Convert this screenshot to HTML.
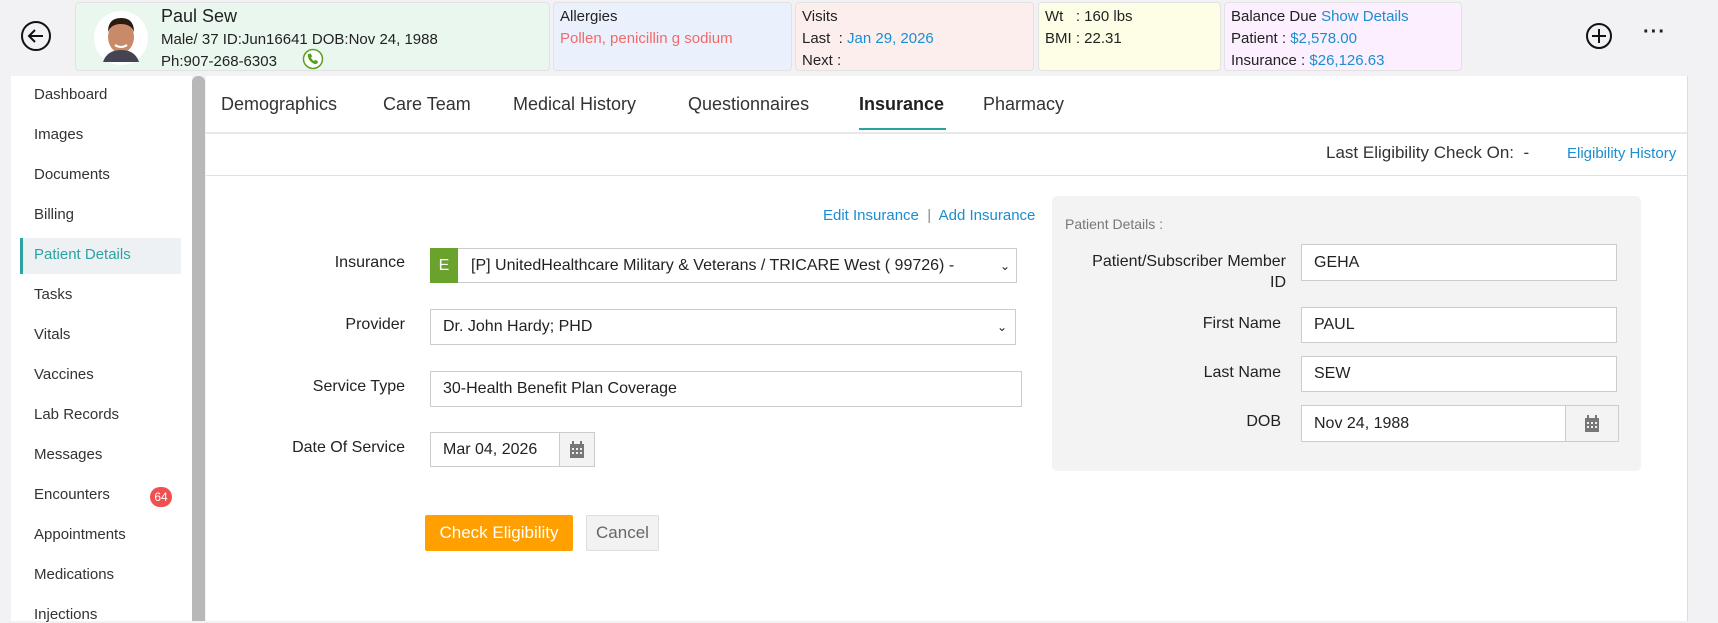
<!DOCTYPE html>
<html><head><meta charset="utf-8"><style>
*{box-sizing:border-box;margin:0;padding:0}
body{width:1718px;height:621px;overflow:hidden;background:#f2f2f4;font-family:"Liberation Sans",sans-serif;color:#222;position:relative}
.a{position:absolute;white-space:nowrap}
.card{position:absolute;top:2px;height:69px;border:1px solid #e2e2e2;border-radius:4px;font-size:15px;line-height:22px;padding:3px 6px}
.blue{color:#1a8ed0}
.side{font-size:15px;color:#333}
.inp{position:absolute;background:#fff;border:1px solid #ccc;font-size:16px;padding-left:12px;display:flex;align-items:center}
.lbl{position:absolute;font-size:16px;text-align:right;color:#222}
.cal{position:absolute;background:#f3f3f3;border:1px solid #ccc;display:flex;align-items:center;justify-content:center}
</style></head><body>
<svg class="a" style="left:20px;top:20px" width="32" height="32" viewBox="0 0 32 32"><circle cx="16" cy="16" r="14" fill="none" stroke="#111" stroke-width="2"/><path d="M23 16H9M15 10l-6 6 6 6" fill="none" stroke="#111" stroke-width="2"/></svg>
<div class="card" style="left:75px;width:475px;background:#eaf7ef">
<svg class="a" style="left:17px;top:7px" width="56" height="56" viewBox="0 0 56 56"><circle cx="28" cy="28" r="27" fill="#fff"/><ellipse cx="28" cy="27" rx="13" ry="16" fill="#c98a6a"/><path d="M15 22q0-14 13-14t13 14q-3-8-13-8t-13 8z" fill="#2a1a12"/><path d="M10 52q4-12 18-12t18 12" fill="#445"/><path d="M22 35q6 4 12 0" stroke="#fff" stroke-width="2" fill="none"/></svg>
<div class="a" style="left:85px;top:2px;font-size:18px">Paul Sew</div>
<div class="a" style="left:85px;top:26px">Male/ 37 ID:Jun16641 DOB:Nov 24, 1988</div>
<div class="a" style="left:85px;top:48px">Ph:907-268-6303</div>
<svg class="a" style="left:226px;top:45px" width="22" height="22" viewBox="0 0 22 22"><circle cx="11" cy="11" r="9.5" fill="#fff" stroke="#5aa020" stroke-width="1.5"/><path d="M7 6q1-1 2 0l1 2q0 1-1 1.5q1 2.5 3 3.5q.5-1 1.5-1l2 1q1 1 0 2q-1 1.5-3 1q-5-2-6.5-7q-.5-1.5 0-3z" fill="#5aa020"/></svg>
</div>
<div class="card" style="left:553px;width:239px;background:#eaf1fd">Allergies<br><span style="color:#f06a6a">Pollen, penicillin g sodium</span></div>
<div class="card" style="left:795px;width:239px;background:#fdeeee">Visits<br>Last &nbsp;: <span class="blue">Jan 29, 2026</span><br>Next :</div>
<div class="card" style="left:1038px;width:183px;background:#fefee6">Wt &nbsp;&nbsp;: 160 lbs<br>BMI : 22.31</div>
<div class="card" style="left:1224px;width:238px;background:#fcefff">Balance Due <span class="blue">Show Details</span><br>Patient : <span class="blue">$2,578.00</span><br>Insurance : <span class="blue">$26,126.63</span></div>
<svg class="a" style="left:1585px;top:22px" width="28" height="28" viewBox="0 0 28 28"><circle cx="14" cy="14" r="12" fill="none" stroke="#111" stroke-width="2"/><path d="M14 7v14M7 14h14" stroke="#111" stroke-width="2"/></svg>
<div class="a" style="left:1643px;top:21px;font-size:20px;letter-spacing:1px;font-weight:bold">&middot;&middot;&middot;</div>
<div class="a" style="left:11px;top:76px;width:181px;height:545px;background:#fff"></div>
<div class="a" style="left:192px;top:76px;width:13px;height:545px;background:#b8b8b8;border-radius:6px 6px 0 0"></div>
<div class="a" style="left:20px;top:238px;width:161px;height:36px;background:#eef1f3;border-left:3px solid #2aa3a3"></div>
<div class="a side" style="left:34px;top:86px">Dashboard</div>
<div class="a side" style="left:34px;top:126px">Images</div>
<div class="a side" style="left:34px;top:166px">Documents</div>
<div class="a side" style="left:34px;top:206px">Billing</div>
<div class="a side" style="left:34px;top:246px;color:#2aa3a3">Patient Details</div>
<div class="a side" style="left:34px;top:286px">Tasks</div>
<div class="a side" style="left:34px;top:326px">Vitals</div>
<div class="a side" style="left:34px;top:366px">Vaccines</div>
<div class="a side" style="left:34px;top:406px">Lab Records</div>
<div class="a side" style="left:34px;top:446px">Messages</div>
<div class="a side" style="left:34px;top:486px">Encounters</div>
<div class="a" style="left:150px;top:487px;width:22px;height:20px;border-radius:10px;background:#f05050;color:#fff;font-size:12px;text-align:center;line-height:20px">64</div>
<div class="a side" style="left:34px;top:526px">Appointments</div>
<div class="a side" style="left:34px;top:566px">Medications</div>
<div class="a side" style="left:34px;top:606px">Injections</div>
<div class="a" style="left:206px;top:76px;width:1482px;height:545px;background:#fff;border-right:1px solid #ddd"></div>
<div class="a" style="left:206px;top:132px;width:1481px;height:2px;background:#e8e8e8"></div>
<div class="a" style="left:206px;top:175px;width:1481px;height:1px;background:#e0e0e0"></div>
<div class="a" style="left:221px;top:94px;font-size:18px;color:#333">Demographics</div>
<div class="a" style="left:383px;top:94px;font-size:18px;color:#333">Care Team</div>
<div class="a" style="left:513px;top:94px;font-size:18px;color:#333">Medical History</div>
<div class="a" style="left:688px;top:94px;font-size:18px;color:#333">Questionnaires</div>
<div class="a" style="left:859px;top:94px;font-size:18px;font-weight:bold;color:#222">Insurance</div>
<div class="a" style="left:859px;top:128px;width:87px;height:2px;background:#2aa3a3"></div>
<div class="a" style="left:983px;top:94px;font-size:18px;color:#333">Pharmacy</div>
<div class="a" style="left:1326px;top:143px;font-size:17px;color:#333">Last Eligibility Check On: &nbsp;-</div>
<div class="a blue" style="left:1567px;top:145px;font-size:15px">Eligibility History</div>
<div class="a blue" style="left:823px;top:207px;font-size:15px">Edit Insurance &nbsp;<span style="color:#888">|</span>&nbsp; Add Insurance</div>
<div class="lbl" style="left:260px;width:145px;top:254px">Insurance</div>
<div class="lbl" style="left:260px;width:145px;top:316px">Provider</div>
<div class="lbl" style="left:260px;width:145px;top:378px">Service Type</div>
<div class="lbl" style="left:240px;width:165px;top:439px">Date Of Service</div>
<div class="inp" style="left:430px;top:248px;width:587px;height:35px;padding-left:40px;font-size:16px">[P] UnitedHealthcare Military &amp; Veterans / TRICARE West ( 99726) -<span style="position:absolute;right:6px;font-size:12px">&#8964;</span></div>
<div class="a" style="left:430px;top:248px;width:28px;height:35px;background:#6aa22e;color:#fff;font-size:16px;text-align:center;line-height:35px">E</div>
<div class="inp" style="left:430px;top:309px;width:586px;height:36px">Dr. John Hardy; PHD<span style="position:absolute;right:8px;font-size:12px">&#8964;</span></div>
<div class="inp" style="left:430px;top:371px;width:592px;height:36px">30-Health Benefit Plan Coverage</div>
<div class="inp" style="left:430px;top:432px;width:130px;height:35px">Mar 04, 2026</div>
<div class="cal" style="left:559px;top:432px;width:36px;height:35px"><svg width="14" height="17" viewBox="0 0 14 17"><rect x="0" y="3" width="14" height="14" fill="#777"/><path d="M3 0v4M11 0v4" stroke="#777" stroke-width="2"/><g fill="#eee"><rect x="2" y="7" width="2" height="2"/><rect x="6" y="7" width="2" height="2"/><rect x="10" y="7" width="2" height="2"/><rect x="2" y="11" width="2" height="2"/><rect x="6" y="11" width="2" height="2"/><rect x="10" y="11" width="2" height="2"/></g></svg></div>
<div class="a" style="left:425px;top:515px;width:148px;height:36px;background:#ffa000;border-radius:2px;color:#fff;font-size:17px;text-align:center;line-height:36px">Check Eligibility</div>
<div class="a" style="left:586px;top:515px;width:73px;height:36px;background:#f2f2f2;border:1px solid #ddd;border-radius:2px;color:#666;font-size:17px;text-align:center;line-height:34px">Cancel</div>
<div class="a" style="left:1052px;top:196px;width:589px;height:275px;background:#f3f3f3;border-radius:5px"></div>
<div class="a" style="left:1065px;top:216px;font-size:14px;color:#777">Patient Details :</div>
<div class="lbl" style="left:1050px;width:236px;top:251px;line-height:21px">Patient/Subscriber Member<br>ID</div>
<div class="lbl" style="left:1100px;width:181px;top:315px">First Name</div>
<div class="lbl" style="left:1100px;width:181px;top:364px">Last Name</div>
<div class="lbl" style="left:1100px;width:181px;top:413px">DOB</div>
<div class="inp" style="left:1301px;top:244px;width:316px;height:37px">GEHA</div>
<div class="inp" style="left:1301px;top:307px;width:316px;height:36px">PAUL</div>
<div class="inp" style="left:1301px;top:356px;width:316px;height:36px">SEW</div>
<div class="inp" style="left:1301px;top:405px;width:265px;height:37px">Nov 24, 1988</div>
<div class="cal" style="left:1565px;top:405px;width:54px;height:37px"><svg width="14" height="17" viewBox="0 0 14 17"><rect x="0" y="3" width="14" height="14" fill="#777"/><path d="M3 0v4M11 0v4" stroke="#777" stroke-width="2"/><g fill="#eee"><rect x="2" y="7" width="2" height="2"/><rect x="6" y="7" width="2" height="2"/><rect x="10" y="7" width="2" height="2"/><rect x="2" y="11" width="2" height="2"/><rect x="6" y="11" width="2" height="2"/><rect x="10" y="11" width="2" height="2"/></g></svg></div>
</body></html>
